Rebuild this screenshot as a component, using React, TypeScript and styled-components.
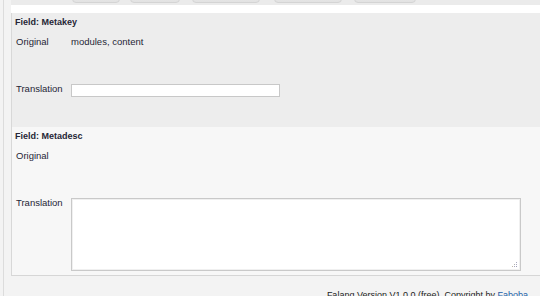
import React from 'react'
import styled, { createGlobalStyle } from 'styled-components'

const GlobalStyle = createGlobalStyle`
  html, body {
    margin: 0;
    padding: 0;
    background: #f3f3f3;
    font-family: "Liberation Sans", Arial, sans-serif;
    color: #262636;
    overflow: hidden;
  }
`

const Page = styled.div`
  margin-left: 3px;
  border-left: 1px solid #dcdcdc;
  padding-left: 7px;
  min-height: 296px;
`

const Toolbar = styled.div`
  height: 5px;
  overflow: hidden;
  display: flex;
  align-items: flex-end;
  background: #ebebeb;
  padding-left: 61px;
`

const ToolButton = styled.div<{ $w: number; $gap: number }>`
  flex: 0 0 ${p => p.$w}px;
  margin-right: ${p => p.$gap}px;
  height: 20px;
  margin-bottom: 2px;
  border: 1px solid #d4d4d4;
  border-radius: 4px;
  background: linear-gradient(#f6f6f6, #e2e2e2);
`

const Spacer = styled.div`
  height: 8px;
  background: #ffffff;
`

const Panel = styled.div`
  border-left: 1px solid #d8d8d8;
  border-bottom: 1px solid #d6d6d6;
`

const Field = styled.div<{ $bg: string; $top: number; $bottom: number }>`
  background: ${p => p.$bg};
  padding: ${p => p.$top}px 0 ${p => p.$bottom}px 3px;
`

const Title = styled.div`
  font-weight: bold;
  font-size: 9px;
  line-height: 12px;
  margin-bottom: 9px;
`

const Row = styled.div<{ $h?: number }>`
  display: flex;
  align-items: flex-start;
  height: ${p => (p.$h ? `${p.$h}px` : 'auto')};
`

const Label = styled.div`
  flex: 0 0 55px;
  padding-left: 1px;
  font-size: 9.5px;
  line-height: 12px;
  margin-top: -1px;
`

const Value = styled.div`
  font-size: 9.5px;
  line-height: 12px;
  margin-top: -1px;
`

const TextInput = styled.input`
  box-sizing: border-box;
  width: 209px;
  height: 13px;
  margin: 0;
  padding: 0 2px;
  border: 1px solid #c8c8c8;
  background: #fff;
  font-size: 9px;
  outline: none;
`

const AreaWrap = styled.div`
  position: relative;
  width: 450px;
  height: 73px;
`

const TextArea = styled.textarea`
  box-sizing: border-box;
  display: block;
  width: 100%;
  height: 100%;
  margin: 0;
  padding: 2px;
  border: 1px solid #c9c9c9;
  box-shadow: inset 0 0 0 1px #f0f0f0;
  background: #fff;
  font-size: 9px;
  resize: none;
  outline: none;
`

const Grip = styled.svg`
  position: absolute;
  right: 3px;
  bottom: 3px;
  width: 6px;
  height: 6px;
  pointer-events: none;
`

const Footer = styled.div`
  padding: 13px 12px 0 0;
  text-align: right;
  font-size: 9px;
  line-height: 12px;
  color: #222;

  a {
    color: #1a5fa8;
    text-decoration: none;
  }
`

const buttons = [
  { w: 46, gap: 10 },
  { w: 48, gap: 12 },
  { w: 66, gap: 14 },
  { w: 66, gap: 12 },
  { w: 60, gap: 0 },
]

export default function App() {
  return (
    <>
      <GlobalStyle />
      <Page>
        <Toolbar>
          {buttons.map((b, i) => (
            <ToolButton key={i} $w={b.w} $gap={b.gap} />
          ))}
        </Toolbar>
        <Spacer />
        <Panel>
          <Field $bg="#ededed" $top={3} $bottom={30}>
            <Title>Field: Metakey</Title>
            <Row $h={47}>
              <Label>Original</Label>
              <Value>modules, content</Value>
            </Row>
            <Row>
              <Label>Translation</Label>
              <TextInput type="text" />
            </Row>
          </Field>
          <Field $bg="#f7f7f7" $top={3} $bottom={4}>
            <Title>Field: Metadesc</Title>
            <Row $h={47}>
              <Label>Original</Label>
              <Value></Value>
            </Row>
            <Row>
              <Label>Translation</Label>
              <AreaWrap>
                <TextArea />
                <Grip viewBox="0 0 6 6">
                  <rect x="4" y="0" width="1" height="1" fill="#a8a8c0" />
                  <rect x="2" y="2" width="1" height="1" fill="#b0b0b0" />
                  <rect x="4" y="2" width="1" height="1" fill="#a8a8c0" />
                  <rect x="0" y="4" width="1" height="1" fill="#c0b8a8" />
                  <rect x="2" y="4" width="1" height="1" fill="#a8a8c0" />
                  <rect x="4" y="4" width="1" height="1" fill="#a0a0b8" />
                </Grip>
              </AreaWrap>
            </Row>
          </Field>
        </Panel>
        <Footer>
          Falang Version V1.0.0 (free). Copyright by <a href="#">Faboba</a>
        </Footer>
      </Page>
    </>
  )
}
